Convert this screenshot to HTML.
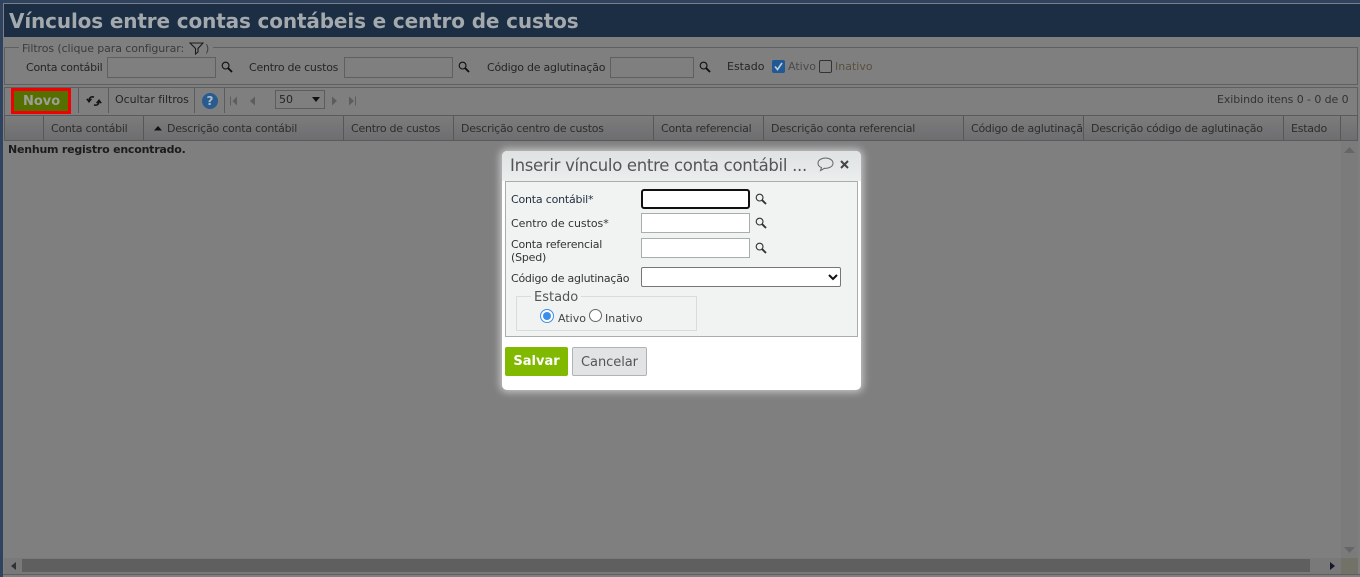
<!DOCTYPE html>
<html lang="pt"><head><meta charset="utf-8"><title>Vínculos</title>
<style>
html,body{margin:0;padding:0}
body{width:1360px;height:577px;overflow:hidden;position:relative;background:#2e435f;font-family:"DejaVu Sans",sans-serif;font-size:11px;color:#252525}
div,span,svg,input{position:absolute;box-sizing:border-box}
.t{white-space:nowrap;line-height:14px}
.s{letter-spacing:-.24px}
.inp{background:#7f7f7f;border:1px solid #5f5f5f;height:21px}
.hd{top:116px;height:25px;border-right:1px solid #575757;line-height:26px;padding-left:7px;white-space:nowrap;overflow:hidden;color:#2d2d2d;letter-spacing:-.24px}
.sep{top:88px;height:25px;width:1px;background:#5c5c5c}
.m input{background:#fff;border:1px solid #a8adad;height:20px;left:139px;width:109px;margin:0}
.m .l{left:9px;color:#333}
</style></head><body>
<svg width="0" height="0" style="position:absolute"><defs>
<symbol id="mag" viewBox="0 0 12 12"><circle cx="4.6" cy="4.6" r="3.4" fill="none" stroke="currentColor" stroke-width="1.1"/><path d="M7.2 7.2L11 11" stroke="currentColor" stroke-width="1.9"/></symbol>
</defs></svg>

<div style="left:3px;top:3px;width:1357px;height:574px;background:#7f7f7f"></div>
<div style="left:4px;top:4px;width:1356px;height:33px;background:#1b2e43"></div>
<div class="t" style="left:9px;top:9px;font-size:20px;line-height:24px;font-weight:bold;color:#a4a9ad;letter-spacing:-.14px">Vínculos entre contas contábeis e centro de custos</div>

<!-- Filtros -->
<div style="left:4px;top:47px;width:1354px;height:38px;border:1px solid #5f5f5f"></div>
<div style="left:19px;top:44px;width:194px;height:6px;background:#7f7f7f"></div>
<div class="t" style="left:22px;top:42px;color:#3c3c3c;letter-spacing:-.1px">Filtros (clique para configurar:</div>
<div class="t" style="left:205px;top:42px;color:#3c3c3c">)</div>
<svg style="left:189px;top:42px" width="15" height="13" viewBox="0 0 15 13"><path d="M1 1H14L9 6.5V10L6.5 12V6.5Z" fill="none" stroke="#1c1c1c" stroke-width="1.1"/></svg>
<div class="t s" style="left:26px;top:61px">Conta contábil</div>
<div class="inp" style="left:107px;top:57px;width:109px"></div>
<svg style="left:221px;top:61px;color:#111" width="12" height="12"><use href="#mag"/></svg>
<div class="t s" style="left:249px;top:61px">Centro de custos</div>
<div class="inp" style="left:344px;top:57px;width:109px"></div>
<svg style="left:458px;top:61px;color:#111" width="12" height="12"><use href="#mag"/></svg>
<div class="t s" style="left:487px;top:61px">Código de aglutinação</div>
<div class="inp" style="left:610px;top:57px;width:84px"></div>
<svg style="left:699px;top:61px;color:#111" width="12" height="12"><use href="#mag"/></svg>
<div class="t" style="left:727px;top:60px">Estado</div>
<div style="left:772px;top:60px;width:13px;height:13px;background:#1f5a96;border-radius:2px"></div>
<svg style="left:772px;top:60px" width="13" height="13" viewBox="0 0 13 13"><path d="M3 6.5L5.5 9.5L10 3" fill="none" stroke="#c5cdd5" stroke-width="1.6"/></svg>
<div class="t" style="left:788px;top:60px;color:#4a4a4a">Ativo</div>
<div style="left:819px;top:60px;width:13px;height:13px;border:1px solid #333;border-radius:2px"></div>
<div class="t" style="left:835px;top:60px;color:#5a5040">Inativo</div>

<!-- Toolbar -->
<div style="left:4px;top:87px;width:1354px;height:29px;border:1px solid #5f5f5f;border-bottom:0"></div>
<div style="left:11px;top:88px;width:60px;height:26px;background:#556f00;border:3px solid #f00000"></div>
<div class="t" style="left:23px;top:95px;font-size:13px;font-weight:bold;color:#9c9f97">Novo</div>
<div class="sep" style="left:78px"></div>
<svg style="left:86px;top:94px" width="16" height="14" viewBox="0 0 16 14"><path d="M8 3.200C5 2 3 3.800 3 6.800M.8 4.800L3 7.800L5.400 4.800M8 10.800C11 12 13 10.200 13 7.200M10.600 9.200L13 6.200L15.200 9.200" fill="none" stroke="#141414" stroke-width="1.500"/></svg>
<div class="sep" style="left:108px"></div>
<div class="t" style="left:115px;top:93px;letter-spacing:-.07px">Ocultar filtros</div>
<div class="sep" style="left:194px"></div>
<div style="left:202px;top:93px;width:16px;height:16px;border-radius:50%;background:#2a5b8e;color:#a8bbcf;font-weight:bold;font-size:12px;line-height:16px;text-align:center">?</div>
<div class="sep" style="left:224px"></div>
<svg style="left:229px;top:95px" width="130" height="12" viewBox="0 0 130 12" fill="#5d5d5d"><path d="M1 1.500h1v9H1zM8 1.500V10.500L3.500 6z"/><path d="M26 1.500V10.500L21 6z"/><path d="M103 1.500V10.500L108 6z"/><path d="M120 1.500V10.500L125 6zM126 1.500h1v9h-1z"/></svg>
<div style="left:275px;top:90px;width:50px;height:19px;border:1px solid #5c5c5c"></div>
<div class="t" style="left:279px;top:93px">50</div>
<svg style="left:311px;top:97px" width="10" height="6"><path d="M1 0H9L5 5Z" fill="#111"/></svg>
<div class="t" style="left:1217px;top:93px;color:#333;letter-spacing:-.09px">Exibindo itens 0 - 0 de 0</div>

<!-- Header -->
<div style="left:4px;top:115px;width:1354px;height:26px;background:linear-gradient(#7c7c7c,#6d6e70);border:1px solid #5a5a5a"></div>
<div class="hd" style="left:5px;width:39px"></div>
<div class="hd" style="left:44px;width:100px">Conta contábil</div>
<div class="hd" style="left:144px;width:200px;padding-left:23px">Descrição conta contábil</div>
<svg style="left:154px;top:126px" width="8" height="5"><path d="M0 4.500L4 0L8 4.500Z" fill="#111"/></svg>
<div class="hd" style="left:344px;width:110px">Centro de custos</div>
<div class="hd" style="left:454px;width:200px">Descrição centro de custos</div>
<div class="hd" style="left:654px;width:110px">Conta referencial</div>
<div class="hd" style="left:764px;width:200px">Descrição conta referencial</div>
<div class="hd" style="left:964px;width:120px">Código de aglutinação</div>
<div class="hd" style="left:1084px;width:200px">Descrição código de aglutinação</div>
<div class="hd" style="left:1284px;width:57px">Estado</div>

<div class="t" style="left:8px;top:143px;font-weight:bold;color:#1c1c1c;letter-spacing:-.22px">Nenhum registro encontrado.</div>

<!-- scrollbars -->
<div style="left:1341px;top:141px;width:17px;height:417px;background:#7b7b7b"></div>
<svg style="left:1344px;top:147px" width="11" height="6"><path d="M0 6L5.500 0L11 6Z" fill="#666"/></svg>
<svg style="left:1344px;top:547px" width="11" height="6"><path d="M0 0L5.500 6L11 0Z" fill="#666"/></svg>
<div style="left:4px;top:558px;width:1354px;height:16px;background:#797979"></div>
<div style="left:22px;top:559px;width:1288px;height:13px;background:#5f5f5f"></div>
<svg style="left:11px;top:562px" width="5" height="8"><path d="M5 0V8L0 4Z" fill="#2e3138"/></svg>
<svg style="left:1330px;top:562px" width="5" height="8"><path d="M0 0V8L5 4Z" fill="#14182a"/></svg>
<div style="left:1341px;top:558px;width:17px;height:16px;background:#727268"></div>
<div style="left:3px;top:574px;width:1357px;height:1px;background:#5f5f5f"></div>

<!-- Modal -->
<div class="m" style="left:502px;top:151px;width:359px;height:239px;background:#fff;border-radius:5px;box-shadow:0 0 8px 2px rgba(225,225,225,.75)">
  <div style="left:0;top:0;width:359px;height:30px;background:linear-gradient(#dfe2e2,#eceeee);border-radius:5px 5px 0 0"></div>
  <div class="t" style="left:8px;top:5px;font-size:16.500px;line-height:20px;color:#555;letter-spacing:-.3px">Inserir vínculo entre conta contábil ...</div>
  <svg style="left:315px;top:6px" width="17" height="15" viewBox="0 0 17 15"><path d="M8.500 1C4.500 1 1 3.200 1 6.200C1 8.200 2.500 9.800 4.500 10.600L3.500 13.500L7.500 11.300C12 11.600 16 9.500 16 6.200C16 3.200 12.500 1 8.500 1Z" fill="none" stroke="#666" stroke-width="1"/></svg>
  <svg style="left:338px;top:9px" width="9" height="9" viewBox="0 0 9 9"><path d="M1 1L8 8M8 1L1 8" stroke="#444" stroke-width="2"/></svg>
  <div style="left:3px;top:30px;width:353px;height:156px;background:#f1f3f2;border:1px solid #a9adad"></div>
  <div class="t l s" style="top:42px;color:#1f2f3f;letter-spacing:-.2px">Conta contábil*</div>
  <input style="top:38px;border:2px solid #101010;border-radius:3px">
  <svg style="left:253px;top:42px;color:#333" width="12" height="12"><use href="#mag"/></svg>
  <div class="t l" style="top:66px;letter-spacing:-.05px">Centro de custos*</div>
  <input style="top:62px">
  <svg style="left:253px;top:66px;color:#333" width="12" height="12"><use href="#mag"/></svg>
  <div class="t l" style="top:87px;line-height:13px;white-space:normal;width:110px;letter-spacing:-.2px">Conta referencial (Sped)</div>
  <input style="top:87px">
  <svg style="left:253px;top:91px;color:#333" width="12" height="12"><use href="#mag"/></svg>
  <div class="t l s" style="top:121px">Código de aglutinação</div>
  <div style="left:139px;top:116px;width:200px;height:20px;background:#fff;border:1px solid #767676;border-radius:2px"></div>
  <svg style="left:326px;top:123px" width="10" height="7" viewBox="0 0 10 7"><path d="M1 1L5 5L9 1" fill="none" stroke="#111" stroke-width="2"/></svg>
  <div style="left:14px;top:145px;width:181px;height:35px;border:1px solid #d8dcdc"></div>
  <div class="t" style="left:29px;top:139px;padding:0 3px;background:#f1f3f2;font-size:13px;line-height:15px;color:#555">Estado</div>
  <div style="left:38px;top:158px;width:14px;height:14px;border-radius:50%;background:#fff;border:1px solid #3b8fe8"></div>
  <div style="left:41px;top:161px;width:8px;height:8px;border-radius:50%;background:#3b8fe8"></div>
  <div class="t" style="left:56px;top:161px;color:#444">Ativo</div>
  <div style="left:87px;top:158px;width:13px;height:13px;border-radius:50%;background:#fff;border:1px solid #666"></div>
  <div class="t" style="left:103px;top:161px;color:#444">Inativo</div>
  <div style="left:3px;top:196px;width:63px;height:29px;background:#80b900;border-radius:2px;color:#fff;font-weight:bold;font-size:13px;line-height:30px;text-align:center">Salvar</div>
  <div style="left:70px;top:196px;width:75px;height:29px;background:#e1e3e5;border:1px solid #b0b3b5;border-radius:2px;color:#555;font-size:13px;line-height:29px;text-align:center;letter-spacing:-.05px">Cancelar</div>
</div>
</body></html>
